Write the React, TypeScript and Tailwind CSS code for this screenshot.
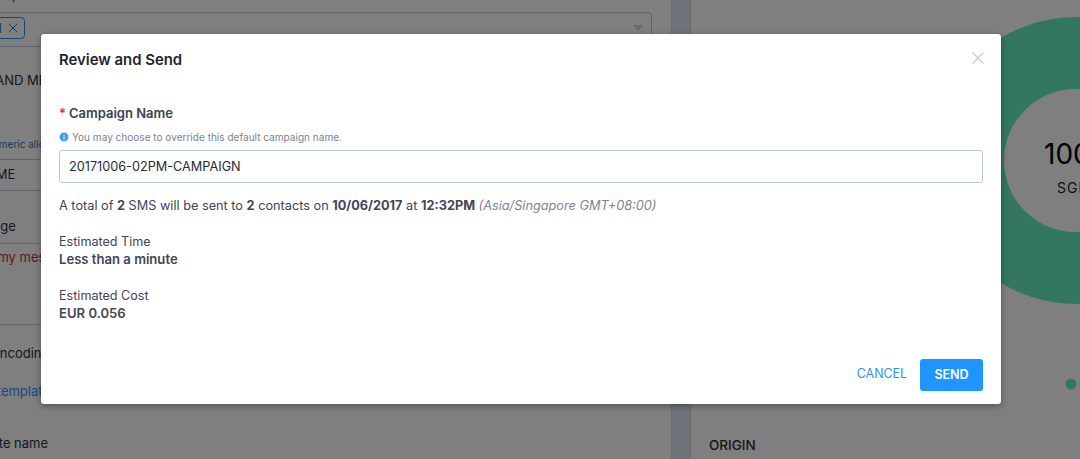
import { Info, X } from "lucide-react";

const font = "font-['Inter','Liberation_Sans',sans-serif]";

function LeftPanel() {
  return (
    <div className="h-full w-[671px] shrink-0 overflow-hidden bg-white text-[13px] leading-[18px] text-[#2a3040]">
      <div className="-mt-[13px] mb-[7px] -ml-[10px] h-[18px] text-[11px]">Recipients</div>
      <div className="relative mr-[19px] -ml-[40px] h-[35px] rounded border border-[#b8c7d9] pt-[4px] pl-[10px]">
        <div className="flex h-[22px] w-[54px] items-center justify-end gap-[3px] rounded border border-[#1f96ff] pr-[3px] text-[#1f7fd8]">
          <span>I</span>
          <X className="size-4" strokeWidth={1.5} />
        </div>
        <span className="absolute top-[12px] right-[8px] border-x-[5px] border-t-[6px] border-x-transparent border-t-[#c6d4e6]" />
      </div>
      <div className="-ml-[60px] mt-[24px] whitespace-nowrap">SENDER AND MESSAGE</div>
      <div className="-ml-[40px] mt-[46px] whitespace-nowrap text-[10px] text-[#3b6fb0]">Alphanumeric allowed</div>
      <div className="mr-[19px] -ml-[40px] mt-[6px] h-[32px] border-y border-[#b8c7d9] pt-[5px] pl-[17px]">
        <span className="whitespace-nowrap">NAME</span>
      </div>
      <div className="-ml-[40px] mt-[26px] whitespace-nowrap">Message</div>
      <div className="mr-[19px] -ml-[40px] mt-[8px] h-[82px] border-y border-[#b8c7d9] pt-[4px] text-[#c03030]">
        <span className="-ml-[6px] inline-block whitespace-nowrap">This is my message</span>
      </div>
      <div className="-ml-[8px] mt-[19px] whitespace-nowrap">Encoding</div>
      <div className="-ml-[31px] mt-[20px] whitespace-nowrap text-[#2f93ff]">Use template</div>
      <div className="-ml-[46px] mt-[34px] whitespace-nowrap">Template name</div>
    </div>
  );
}

function RightPanel() {
  return (
    <div className="relative h-full flex-1 overflow-hidden bg-white pt-[432px] pl-[18px]">
      <span className="text-[13.5px] leading-[18px] font-medium text-[#2a3040]">ORIGIN</span>
      {/* donut chart */}
      <svg className="absolute top-0 left-0" width="389" height="400" viewBox="0 0 389 400">
        <path
          fillRule="evenodd"
          fill="#66eebe"
          d="M384.5 17a143.5 143.5 0 1 0 0 287a143.5 143.5 0 1 0 0-287ZM384.5 89a71.5 71.5 0 1 1 0 143a71.5 71.5 0 1 1 0-143Z"
        />
        <circle cx="380" cy="384" r="5.5" fill="#66eebe" />
      </svg>
      <div className="absolute top-[136px] left-[353px] text-[28px] leading-[36px] whitespace-nowrap text-black">100%</div>
      <div className="absolute top-[179px] left-[366px] text-[14px] leading-[18px] tracking-[1px] text-[#222]">SGP</div>
    </div>
  );
}

function ReviewModal() {
  return (
    <div className="flex h-[370px] w-[960px] flex-col rounded-[3px] bg-white px-[18px] shadow-[0_2px_6px_rgba(0,0,0,0.35)]">
      <div className="flex h-[36px] items-end justify-between">
        <h2 className="text-[14.9px] leading-[20px] font-semibold text-[#1f2533]">Review and Send</h2>
        <X className="-mr-[5px] mb-[2px] size-[20px] text-[#c3cedb]" strokeWidth={1.5} />
      </div>
      <div className="mt-[34px] flex items-center text-[13px] leading-[18px] font-semibold text-[#3b4254]">
        <span className="w-[10px] text-[#f5222d]">*</span>
        Campaign Name
      </div>
      <div className="mt-[8px] -ml-[1px] flex items-center gap-[2px] text-[10.05px] leading-[14px] text-[#7b8396]">
        <Info className="size-[12px] fill-[#3ba0f5] text-white" strokeWidth={2.2} />
        You may choose to override this default campaign name.
      </div>
      <div className="mt-[6px] flex h-[33px] items-center rounded-[3px] border border-[#b8c7d9] pl-[9px] text-[12.7px] text-[#232b3a]">
        20171006-02PM-CAMPAIGN
      </div>
      <p className="mt-[14px] text-[12.72px] leading-[18px] text-[#3f4658]">
        A total of <b className="font-bold">2</b> SMS will be sent to <b className="font-bold">2</b> contacts on{" "}
        <b className="font-bold">10/06/2017</b> at <b className="font-bold">12:32PM</b>{" "}
        <i className="text-[#7b8396]">(Asia/Singapore GMT+08:00)</i>
      </p>
      <div className="mt-[18px] text-[12.6px] leading-[17px] text-[#3f4658]">Estimated Time</div>
      <div className="text-[13.1px] leading-[18px] font-semibold text-[#3f4658]">Less than a minute</div>
      <div className="mt-[19px] text-[12.6px] leading-[17px] text-[#3f4658]">Estimated Cost</div>
      <div className="text-[13.1px] leading-[18px] font-semibold text-[#3f4658]">EUR 0.056</div>
      <div className="mt-auto flex items-center justify-end gap-[13px] pb-[13px]">
        <button type="button" className="-mt-[1px] text-[12.4px] text-[#2f93ff]">
          CANCEL
        </button>
        <button type="button" className="h-[32px] w-[63px] rounded-[3px] bg-[#1f96ff] text-[12.5px] font-semibold text-white">
          SEND
        </button>
      </div>
    </div>
  );
}

export default function App() {
  return (
    <div className={`relative h-[459px] w-[1080px] overflow-hidden ${font}`}>
      <div className="flex h-full">
        <LeftPanel />
        <div className="h-full w-[20px] shrink-0 border-x border-[#d4dbe6] bg-[#dee4f0]" />
        <RightPanel />
      </div>
      <div className="absolute inset-0 bg-black/50 pt-[34px] pl-[41px]">
        <ReviewModal />
      </div>
    </div>
  );
}
